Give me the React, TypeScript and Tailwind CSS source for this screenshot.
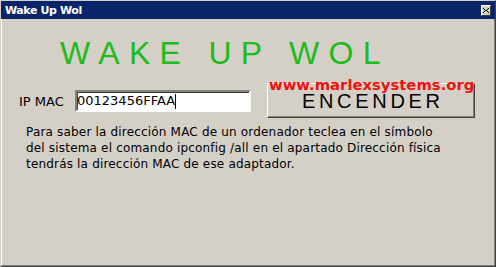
import React from "react";

export default function App() {
  return (
    <div className="relative w-[496px] h-[267px] bg-[#d4d0c8] border border-t-[#d4d0c8] border-l-[#d4d0c8] border-r-[#404040] border-b-[#404040] flex flex-col overflow-hidden">
      {/* Title bar */}
      <div className="h-[18px] bg-[#0a246a] flex items-center justify-between shrink-0">
        <span className="pl-[4px] text-white font-bold text-[11px] tracking-[-0.4px] leading-none font-['DejaVu_Sans',sans-serif]">
          Wake Up Wol
        </span>
        <div className="mr-[4px] w-[10px] h-[11px] bg-[#d4d0c8] border border-t-white border-l-white border-r-[#404040] border-b-[#404040] flex items-center justify-center">
          <svg width="6" height="5" viewBox="0 0 6 5" shapeRendering="crispEdges">
            <path d="M0 0h1v1H0zM1 1h1v1H1zM2 2h2v1H2zM4 1h1v1H4zM5 0h1v1H5zM1 3h1v1H1zM0 4h1v1H0zM4 3h1v1H4zM5 4h1v1H5z" fill="#000" />
          </svg>
        </div>
      </div>

      {/* Body */}
      <div className="flex-1 flex flex-col border-l border-l-white border-r border-r-[#808080] border-b border-b-[#808080]">
        <div className="mt-[18px] ml-[58px] text-[32px] leading-[32px] tracking-[9.3px] text-[#1cbc1c] font-['Liberation_Sans',Arial,sans-serif] whitespace-nowrap">
          WAKE UP WOL
        </div>

        <div className="mt-[14px] pl-[17px] flex items-start">
          <span className="w-[56px] mt-[11px] text-[13px] leading-[16px] text-black font-['DejaVu_Sans',sans-serif]">
            IP MAC
          </span>
          <div className="mt-[7px] w-[176px] h-[22px] bg-white border-2 border-t-[#808080] border-l-[#808080] border-r-white border-b-white shadow-[inset_1px_1px_0_#404040] flex items-center">
            <span className="text-[13px] leading-[16px] text-black font-['DejaVu_Sans',sans-serif]">
              00123456FFAA
            </span>
            <span className="w-px h-[15px] bg-black" />
          </div>
          <div className="ml-[16px] w-[208px] h-[35px] border border-t-white border-l-white border-r-[#404040] border-b-[#404040] shadow-[inset_-1px_-1px_0_#808080] flex items-center justify-center">
            <span className="text-[20px] leading-none tracking-[3.7px] pl-[3.7px] text-black font-['Liberation_Sans',Arial,sans-serif]">
              ENCENDER
            </span>
          </div>
        </div>

        <div className="mt-[6px] pl-[24px] text-[12px] leading-[16px] tracking-[0.18px] text-black font-['DejaVu_Sans',sans-serif] whitespace-nowrap">
          <div>Para saber la dirección MAC de un ordenador teclea en el símbolo</div>
          <div>del sistema el comando ipconfig /all en el apartado Dirección física</div>
          <div>tendrás la dirección MAC de ese adaptador.</div>
        </div>
      </div>

      {/* Red watermark overlay */}
      <div className="absolute left-[268px] top-[77px] text-[14.8px] leading-[14.8px] font-bold text-[#f21010] font-['DejaVu_Sans',sans-serif] whitespace-nowrap">
        www.marlexsystems.org
      </div>
    </div>
  );
}
